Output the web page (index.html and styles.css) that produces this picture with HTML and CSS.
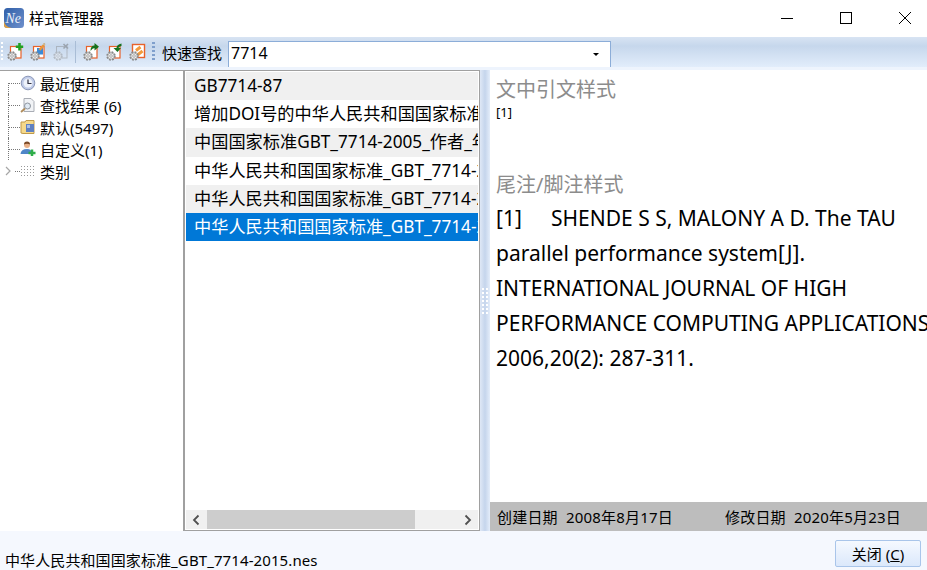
FILE: index.html
```html
<!DOCTYPE html>
<html lang="zh-CN">
<head>
    <meta charset="UTF-8">
    <title>样式管理器</title>
    <link rel="stylesheet" href="styles.css">
</head>
<body>
    <div class="window">
        <div class="titlebar">
            <svg class="app-icon" width="20" height="20" viewBox="0 0 20 20">
                <defs>
                    <linearGradient id="logoBg" x1="0" y1="0" x2="1" y2="1">
                        <stop offset="0" stop-color="#2f5fa8"/>
                        <stop offset="1" stop-color="#6f90cc"/>
                    </linearGradient>
                </defs>
                <rect width="20" height="20" rx="3.500" fill="url(#logoBg)"/>
                <path d="M0 13Q1 19 8 20H3Q0 20 0 17Z" fill="#e0a040"/>
                <text x="1.500" y="15" class="app-logo">Ne</text>
            </svg>
            <span class="title">样式管理器</span>
            <div class="win-btns">
                <svg width="14" height="14" viewBox="0 0 14 14"><path d="M1 7.500H13" stroke="#000"/></svg>
                <svg width="14" height="14" viewBox="0 0 14 14"><rect x="1.500" y="1.500" width="11" height="11" fill="none" stroke="#000"/></svg>
                <svg width="14" height="14" viewBox="0 0 14 14"><path d="M1 1L13 13M13 1L1 13" stroke="#000"/></svg>
            </div>
        </div>

        <div class="toolbar">
            <div class="handle"></div>
            <div class="tool-group">
                <svg class="tool" viewBox="0 0 18 18"><use href="#doc"/><use href="#gear"/><path d="M13.500 0V7.500M9.800 3.700H17.200" stroke="#22a022" stroke-width="2.600"/></svg>
                <svg class="tool" viewBox="0 0 18 18"><use href="#doc"/><rect x="8" y="5" width="6" height="6.500" fill="#3a8ad8"/><use href="#gear"/><path d="M10.500 7L15 2" stroke="#e8953c" stroke-width="2.600"/><path d="M14.500 1.500L16 0.500" stroke="#c9b28a" stroke-width="2"/></svg>
                <svg class="tool disabled" viewBox="0 0 18 18"><rect x="4.500" y="3.500" width="10.500" height="11.500" fill="none" stroke="#8a8a8a"/><use href="#gear"/><path d="M11.500 1L16 5.500M16 1L11.500 5.500" stroke="#666" stroke-width="1.600"/></svg>
            </div>
            <div class="sep"></div>
            <div class="tool-group">
                <svg class="tool" viewBox="0 0 18 18"><use href="#doc"/><use href="#gear"/><path d="M8.500 8Q8.500 2.500 12.500 2.500V0L17 3.800L12.500 7.500V5Q10.500 5 8.500 8Z" fill="#15701c"/></svg>
                <svg class="tool" viewBox="0 0 18 18"><use href="#doc"/><use href="#gear"/><path d="M16.500 0.500Q11.500 1.500 11.500 5H8.500L12.500 9L16 5H13.500Q13.500 3.500 16.500 3Z" fill="#15701c"/></svg>
                <svg class="tool" viewBox="0 0 18 18"><rect x="4.500" y="1.500" width="12" height="13" fill="#fff" stroke="#e8622a" stroke-width="1.400"/><path d="M8 7.500L12.500 4M9.500 12L14.500 8" stroke="#f39a3c" stroke-width="3"/><use href="#gear"/></svg>
            </div>
            <div class="grip"></div>
            <span class="quick-label">快速查找</span>
            <div class="combo">
                <span>7714</span>
                <span class="combo-arrow"></span>
            </div>
        </div>

        <svg width="0" height="0" class="defs">
            <defs>
                <rect id="doc" x="4.500" y="3.500" width="10.500" height="11.500" fill="#fff" stroke="#e8622a" stroke-width="1.200"/>
                <g id="gear">
                    <circle cx="6" cy="13" r="3.800" fill="#eee" stroke="#858585" stroke-width="1.800" stroke-dasharray="1.800 1.200"/>
                    <circle cx="6" cy="13" r="3.300" fill="none" stroke="#a0a0a0" stroke-width="0.700"/>
                    <circle cx="6" cy="13" r="1.300" fill="#fff" stroke="#888" stroke-width="0.700"/>
                </g>
            </defs>
        </svg>

        <div class="main">
            <div class="tree">
                <div class="tree-row">
                    <span class="dots"></span>
                    <svg class="tree-icon" viewBox="0 0 16 16"><circle cx="8" cy="8" r="6.800" fill="#c0cbe8" stroke="#8b97b8"/><circle cx="8" cy="8" r="4.500" fill="#eef2fb"/><path d="M8 4.500V8.500H11.500" fill="none" stroke="#334" stroke-width="1.200"/></svg>
                    <span>最近使用</span>
                </div>
                <div class="tree-row">
                    <span class="dots"></span>
                    <svg class="tree-icon" viewBox="0 0 16 16"><path d="M4 1.500H11L14 4.500V14.500H4Z" fill="#f1f3f6" stroke="#a9adb5"/><circle cx="7.500" cy="9" r="3" fill="#dfe9f3" stroke="#8e959f"/><path d="M5 11.500L1 15" stroke="#b08c5a" stroke-width="1.800"/></svg>
                    <span>查找结果 (6)</span>
                </div>
                <div class="tree-row">
                    <span class="dots"></span>
                    <svg class="tree-icon" viewBox="0 0 16 16"><path d="M1 3H5L6 1.500H14V14.500H3L1 14Z" fill="#f5d98b" stroke="#c09a4a"/><rect x="6" y="5" width="8" height="8" fill="#5f80c0"/><rect x="7" y="6" width="3" height="3" fill="#a9c0e8"/></svg>
                    <span>默认(5497)</span>
                </div>
                <div class="tree-row">
                    <span class="dots"></span>
                    <svg class="tree-icon" viewBox="0 0 16 16"><circle cx="7" cy="4" r="3" fill="#e8b088"/><path d="M4 3.500Q4 0.500 7 0.500Q10 0.500 10 3.500Q7 2 4 3.500Z" fill="#7a4a28"/><path d="M0.500 13Q1 8 7 8Q12 8 12 13Z" fill="#4f86c8"/><path d="M12 8.500V15M8.500 12H15.500" stroke="#2fae4a" stroke-width="2.500"/></svg>
                    <span>自定义(1)</span>
                </div>
                <div class="tree-row last">
                    <svg class="expander" width="6" height="10" viewBox="0 0 6 10"><path d="M1 1L5 5L1 9" fill="none" stroke="#a6a6a6" stroke-width="1.200"/></svg>
                    <span class="dots short"></span>
                    <span class="tree-grid"></span>
                    <span>类别</span>
                </div>
            </div>

            <div class="style-list">
                <div class="rows">
                    <div class="row alt">GB7714-87</div>
                    <div class="row">增加DOI号的中华人民共和国国家标准_GBT_7714-2005.nes</div>
                    <div class="row alt">中国国家标准GBT_7714-2005_作者_年份制.nes</div>
                    <div class="row">中华人民共和国国家标准_GBT_7714-2005.nes</div>
                    <div class="row alt">中华人民共和国国家标准_GBT_7714-2005_2.nes</div>
                    <div class="row selected">中华人民共和国国家标准_GBT_7714-2015.nes</div>
                </div>
                <div class="hscroll">
                    <svg width="8" height="12" viewBox="0 0 8 12"><path d="M6.500 1.500L2 6L6.500 10.500" fill="none" stroke="#505050" stroke-width="1.800"/></svg>
                    <div class="hscroll-track"><div class="hscroll-thumb"></div></div>
                    <svg width="8" height="12" viewBox="0 0 8 12"><path d="M1.500 1.500L6 6L1.500 10.500" fill="none" stroke="#505050" stroke-width="1.800"/></svg>
                </div>
            </div>

            <div class="splitter"><div class="splitter-grip"></div></div>

            <div class="preview">
                <div class="preview-body">
                    <h2 class="preview-head">文中引文样式</h2>
                    <div class="cite">[1]</div>
                    <h2 class="preview-head second">尾注/脚注样式</h2>
                    <p class="reference"><span class="ref-num">[1]</span>SHENDE S S, MALONY A D. The TAU parallel performance system[J]. INTERNATIONAL JOURNAL OF HIGH PERFORMANCE COMPUTING APPLICATIONS, 2006,20(2): 287-311.</p>
                </div>
                <div class="dates">
                    <span class="date-a">创建日期&nbsp;&nbsp;2008年8月17日</span>
                    <span>修改日期&nbsp;&nbsp;2020年5月23日</span>
                </div>
            </div>
        </div>

        <div class="footer">
            <span class="file-name">中华人民共和国国家标准_GBT_7714-2015.nes</span>
            <button class="close-btn">关闭 (<u>C</u>)</button>
        </div>
    </div>
</body>
</html>
```
FILE: styles.css
```css
html, body {
    margin: 0;
    padding: 0;
    height: 100%;
    overflow: hidden;
}
body {
    font-family: "Noto Sans", "Noto Sans CJK SC", sans-serif;
    font-size: 15px;
    color: #000;
    background: #fff;
}
.window {
    display: flex;
    flex-direction: column;
    height: 570px;
    width: 927px;
    overflow: hidden;
}
.defs {
    position: absolute;
}
.titlebar {
    height: 37px;
    box-sizing: border-box;
    display: flex;
    align-items: center;
    padding: 0 0 2px 4px;
    background: #fff;
    flex: none;
}
.app-logo {
    font-family: "Liberation Serif", serif;
    font-style: italic;
    font-size: 14px;
    fill: #eef3fb;
}
.title {
    margin-left: 5px;
}
.win-btns {
    margin-left: auto;
    display: flex;
    gap: 45px;
    padding-right: 15px;
}
.toolbar {
    height: 30px;
    flex: none;
    display: flex;
    align-items: center;
    background: linear-gradient(#d8e4f3, #c6d7ec 30%, #e2edfb);
}
.handle {
    width: 2px;
    height: 20px;
    margin: 0 3px 0 1px;
    background: repeating-linear-gradient(#fff 0 2px, transparent 2px 4px);
}
.tool-group {
    display: flex;
    gap: 5px;
}
.tool {
    width: 18px;
    height: 18px;
}
.tool.disabled {
    opacity: 0.45;
}
.sep {
    width: 1px;
    height: 22px;
    margin: 0 6px 0 5px;
    background: #a9bdd6;
}
.grip {
    width: 3px;
    height: 20px;
    margin: 0 7px 0 6px;
    background: repeating-linear-gradient(#7f9fcc 0 2px, transparent 2px 4px);
}
.combo {
    width: 383px;
    height: 26px;
    margin-left: 6px;
    align-self: flex-end;
    box-sizing: border-box;
    border: 1px solid #8cadd8;
    border-bottom: none;
    background: #fff;
    display: flex;
    align-items: center;
    justify-content: space-between;
    padding: 0 11px 4px 2px;
    font-size: 16px;
}
.combo-arrow {
    width: 0;
    height: 0;
    margin-top: 4px;
    border-left: 3px solid transparent;
    border-right: 3px solid transparent;
    border-top: 3px solid #000;
}
.main {
    flex: 1;
    min-height: 0;
    display: flex;
    padding-top: 3px;
    background: #eef4fd;
}
.tree {
    width: 183px;
    flex: none;
    box-sizing: border-box;
    border-top: 1px solid #a0a0a0;
    padding-top: 1px;
    background: #fff;
}
.tree-row {
    height: 22px;
    display: flex;
    align-items: center;
    position: relative;
}
.tree-row::before {
    content: "";
    position: absolute;
    left: 8px;
    top: 0;
    bottom: 0;
    border-left: 1px dotted #777;
}
.tree-row:first-child::before {
    top: 11px;
}
.tree-row.last::before {
    display: none;
}
.dots {
    width: 11px;
    margin-left: 9px;
    border-top: 1px dotted #777;
}
.dots.short {
    width: 5px;
    margin-left: 4px;
}
.expander {
    margin-left: 5px;
}
.tree-icon {
    width: 16px;
    height: 16px;
    margin: 0 4px 0 0;
}
.tree-grid {
    width: 15px;
    height: 13px;
    margin: 0 5px 0 0;
    background-image: radial-gradient(#999 0.7px, transparent 0.8px);
    background-size: 3px 3px;
}
.style-list {
    width: 297px;
    flex: none;
    box-sizing: border-box;
    display: flex;
    flex-direction: column;
    border: 1px solid #a0a0a0;
    border-left-width: 2px;
    padding: 1px 1px 0;
    overflow: hidden;
    background: #fff;
}
.rows {
    flex: 1;
    min-height: 0;
    overflow: hidden;
}
.row {
    height: 28.2px;
    line-height: 27px;
    padding-left: 8px;
    font-size: 17.2px;
    white-space: nowrap;
    overflow: hidden;
    box-sizing: border-box;
}
.row.alt {
    background: #f0f0f0;
}
.row.selected {
    background: #0078d7;
    color: #fff;
}
.hscroll {
    height: 19px;
    flex: none;
    margin-bottom: 1px;
    display: flex;
    align-items: center;
    background: #f0f0f0;
    padding: 0 6px;
    gap: 7px;
}
.hscroll-track {
    flex: 1;
    height: 100%;
}
.hscroll-thumb {
    width: 208px;
    height: 100%;
    background: #cdcdcd;
}
.splitter {
    width: 10px;
    flex: none;
    display: flex;
    align-items: center;
    justify-content: center;
    background: linear-gradient(90deg, #dfe8f6, #c5d5ec 50%, #e4edfa);
}
.splitter-grip {
    width: 8px;
    height: 28px;
    background-image: radial-gradient(#fff 1.100px, transparent 1.300px);
    background-size: 4px 4px;
}
.preview {
    flex: 1;
    min-width: 0;
    display: flex;
    flex-direction: column;
    background: #fff;
}
.preview-body {
    flex: 1;
    min-height: 0;
    padding: 6px 0 0 6px;
}
.preview-head {
    margin: 0;
    font-size: 20px;
    font-weight: normal;
    line-height: 28px;
    color: #8c8c8c;
}
.preview-head.second {
    margin-top: 50px;
}
.cite {
    font-size: 13px;
    line-height: 17px;
}
.reference {
    margin: 2px 0 0;
    font-size: 21px;
    line-height: 35px;
    width: 460px;
}
.ref-num {
    display: inline-block;
    width: 55px;
}
.dates {
    height: 29px;
    flex: none;
    display: flex;
    align-items: center;
    padding-left: 7px;
    background: #bdbdbd;
    letter-spacing: 0.2px;
}
.date-a {
    width: 228px;
}
.footer {
    height: 39px;
    flex: none;
    box-sizing: border-box;
    display: flex;
    align-items: flex-end;
    justify-content: space-between;
    padding: 0 5px;
    background: #f5f8fe;
}
.file-name {
    line-height: 20px;
    letter-spacing: 0.1px;
}
.close-btn {
    width: 86px;
    height: 27px;
    margin: 0 1px 3px 0;
    border: 1px solid #a9c5ea;
    border-radius: 2px;
    background: linear-gradient(#f5f9ff, #dbe8fb);
    font-family: inherit;
    font-size: 15px;
    padding: 0;
}
```
